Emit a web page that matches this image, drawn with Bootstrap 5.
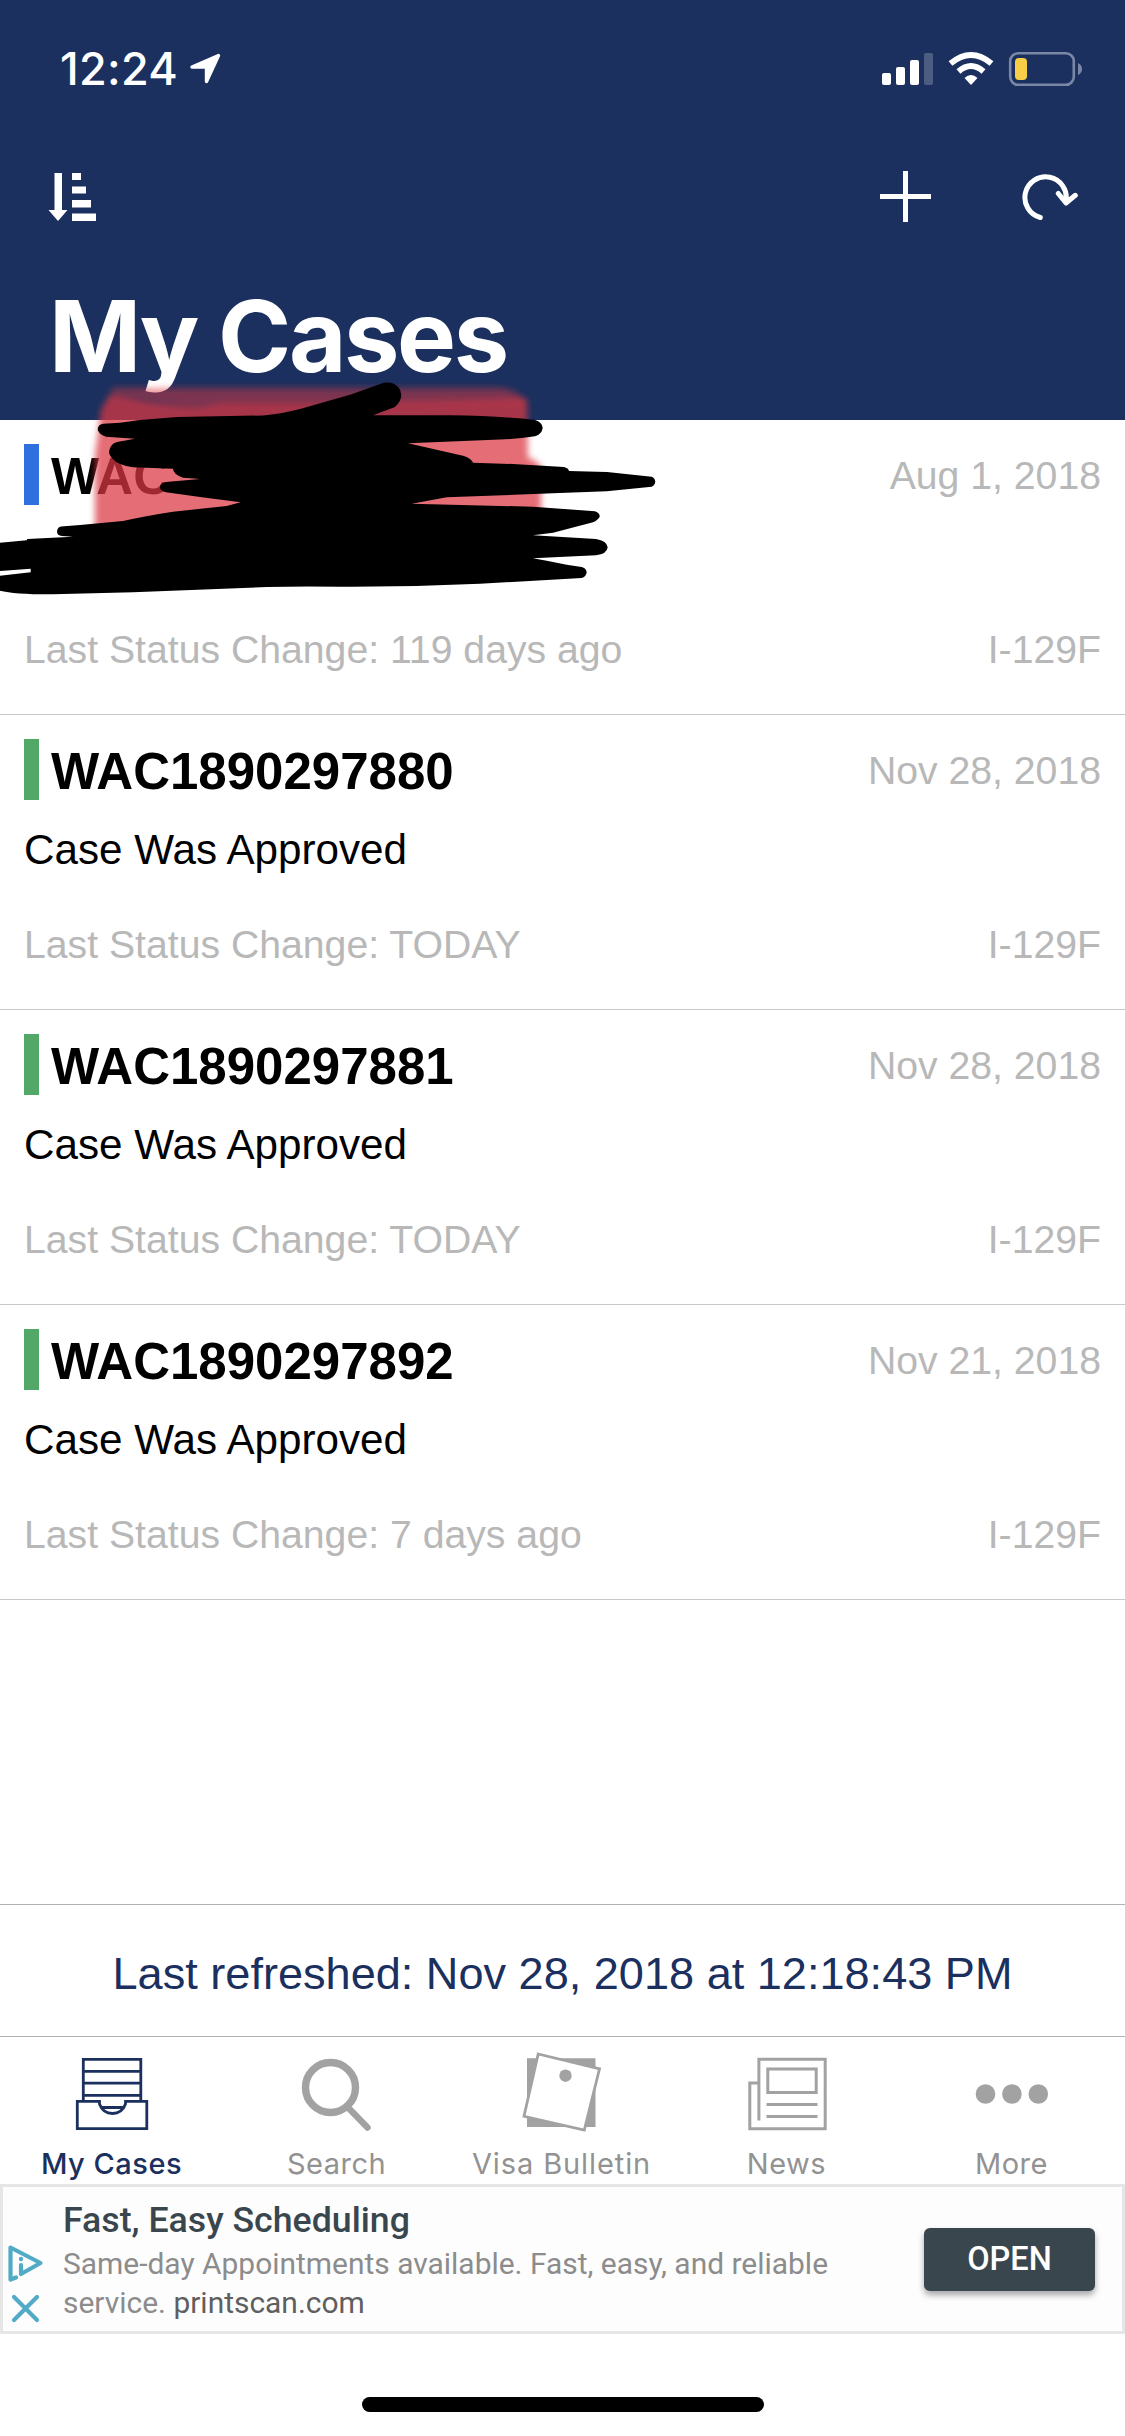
<!DOCTYPE html>
<html lang="en">
<head>
<meta charset="utf-8">
<meta name="viewport" content="width=device-width, initial-scale=1">
<title>My Cases</title>
<link href="https://cdn.jsdelivr.net/npm/bootstrap@5.3.0/dist/css/bootstrap.min.css" rel="stylesheet">
<style>
  body { font-family: "Liberation Sans", Arial, sans-serif; color: #000; }
  svg { display: block; }
  .screen { width: 1125px; height: 2436px; background: #fff; }
  .app-head { height: 420px; background: #1b305e; color: #fff; font-family: Inter, sans-serif; }
  .status-line { height: 138px; padding: 0 43px 0 60px; }
  .clock { font-size: 45px; font-weight: 500; line-height: 138px; letter-spacing: .3px; }
  .tools { height: 118px; padding: 0 47px 0 48px; }
  .head-title { font-size: 99px; font-weight: 700; line-height: 120px; padding-left: 49px; margin: 20px 0 0; letter-spacing: -2.4px; }
  .case-row { height: 295px; padding: 24px 24px 0; border-bottom: 1px solid #c8c7cc; }
  .flag { width: 15px; height: 61px; margin-right: 12px; }
  .flag-blue { background: #2f6fde; }
  .flag-green { background: #52a866; }
  .receipt { font-size: 51px; font-weight: 700; line-height: 66px; height: 64px; }
  .date-text { font-size: 39.2px; line-height: 64px; height: 63px; color: #b8b8b8; }
  .state-text { font-size: 42.2px; line-height: 62px; height: 60px; margin-top: 16px; }
  .meta-text { font-size: 39.2px; line-height: 52px; margin-top: 40px; color: #b8b8b8; }
  .refreshed { height: 133px; border-top: 1px solid #b2b2b2; border-bottom: 1px solid #b2b2b2; color: #1b305e; font-size: 45.1px; line-height: 137px; }
  .tab-strip { height: 147px; padding-top: 13px; font-family: Inter, sans-serif; font-size: 29px; line-height: 36px; color: #929292; }
  .tab-strip svg { margin-bottom: 10px; }
  .tab-strip span { margin-right: 2px; }
  .tab-item { width: 225px; letter-spacing: .5px; }
  .tab-item.on { color: #1b305e; font-weight: 500; }
  .tab-wide { letter-spacing: .9px; }
  .ad-box { height: 150px; border: 3px solid #e6e6e6; padding: 0 27px 0 5px; font-family: Roboto, sans-serif; background: #fdfdfd; }
  .ad-marks { margin-top: 52px; }
  .ad-copy { padding: 12px 0 0 19px; }
  .ad-title { font-size: 35.7px; font-weight: 500; line-height: 42px; color: #3a464d; }
  .ad-desc { font-size: 29.95px; line-height: 39px; margin-top: 3px; color: #8c8c8c; }
  .ad-desc span { color: #5f5f5f; }
  .ad-open { width: 171px; height: 63px; padding: 0; border: 0; border-radius: 6px; background: #3a464d; color: #fff; font-size: 32.5px; font-weight: 500; line-height: 60px; box-shadow: 0 4px 6px rgba(0,0,20,.35); }
  .home-zone { height: 102px; padding-top: 63px; }
  .home-bar { width: 402px; height: 15px; border-radius: 8px; background: #000; }
  .scribble { left: 0; top: 370px; pointer-events: none; }
</style>
</head>
<body>
<div class="screen position-relative overflow-hidden d-flex flex-column">
  <header class="app-head flex-shrink-0">
    <div class="status-line d-flex align-items-center justify-content-between">
      <div class="d-flex align-items-center">
        <span class="clock">12:24</span>
        <svg class="ms-2" width="36" height="32" viewBox="186 53 36 32"><path d="M218.500 55.500L192 67H206.500V81.500Z" fill="#fff" stroke="#fff" stroke-width="3.400" stroke-linejoin="round"/></svg>
      </div>
      <svg width="201" height="36" viewBox="881 51 201 36">
        <g fill="#fff"><rect x="882" y="73" width="9" height="12" rx="2"/><rect x="896" y="67" width="9" height="18" rx="2"/><rect x="910" y="60" width="9" height="25" rx="2"/><rect x="924" y="53" width="9" height="32" rx="2" opacity=".22"/>
        <path d="M971 85L964.500 78Q971 72 977.500 78Z"/></g>
        <g fill="none" stroke="#fff" stroke-width="6"><path d="M958.500 71.500Q971 60.500 983.500 71.500"/><path d="M950.500 63.500Q971 46.500 991.500 63.500"/></g>
        <rect x="1010.200" y="53.200" width="63.600" height="31.600" rx="8" fill="none" stroke="#7a87a5" stroke-width="2.600"/>
        <path d="M1078 63Q1082 65 1082 69T1078 75Z" fill="#7a87a5"/>
        <rect x="1015" y="58" width="12" height="22" rx="4" fill="#f7ce46"/>
      </svg>
    </div>
    <div class="tools d-flex align-items-center justify-content-between">
      <svg width="49" height="50" viewBox="48 172 49 50" fill="#fff"><path d="M54.500 173h7.500v37h5.500L58 221L48.500 210h6zM72 173h9v7h-9zM72 186.500h14v7H72zM72 200h19v7.500H72zM72 213.500h24v7.500H72z"/></svg>
      <svg width="198" height="52" viewBox="880 171 198 52" fill="none" stroke="#fff"><path d="M880 196.500h51M905.500 171v51" stroke-width="5"/><path d="M1040.300 217.500A20.700 20.700 0 1 1 1066 201M1058.300 193.500L1066 203L1075.300 195.300" stroke-width="5" stroke-linecap="round" stroke-linejoin="round"/></svg>
    </div>
    <h1 class="head-title">My Cases</h1>
  </header>

  <main class="flex-grow-1">
    <section class="case-row">
      <div class="d-flex align-items-start"><span class="flag flag-blue"></span><span class="receipt">WAC</span><span class="date-text ms-auto">Aug 1, 2018</span></div>
      <div class="state-text"></div>
      <div class="meta-text d-flex justify-content-between"><span>Last Status Change: 119 days ago</span><span>I-129F</span></div>
    </section>
    <section class="case-row">
      <div class="d-flex align-items-start"><span class="flag flag-green"></span><span class="receipt">WAC1890297880</span><span class="date-text ms-auto">Nov 28, 2018</span></div>
      <div class="state-text">Case Was Approved</div>
      <div class="meta-text d-flex justify-content-between"><span>Last Status Change: TODAY</span><span>I-129F</span></div>
    </section>
    <section class="case-row">
      <div class="d-flex align-items-start"><span class="flag flag-green"></span><span class="receipt">WAC1890297881</span><span class="date-text ms-auto">Nov 28, 2018</span></div>
      <div class="state-text">Case Was Approved</div>
      <div class="meta-text d-flex justify-content-between"><span>Last Status Change: TODAY</span><span>I-129F</span></div>
    </section>
    <section class="case-row">
      <div class="d-flex align-items-start"><span class="flag flag-green"></span><span class="receipt">WAC1890297892</span><span class="date-text ms-auto">Nov 21, 2018</span></div>
      <div class="state-text">Case Was Approved</div>
      <div class="meta-text d-flex justify-content-between"><span>Last Status Change: 7 days ago</span><span>I-129F</span></div>
    </section>
  </main>

  <footer class="flex-shrink-0">
    <div class="refreshed text-center">Last refreshed: Nov 28, 2018 at 12:18:43 PM</div>
    <nav class="tab-strip d-flex">
      <div class="tab-item on d-flex flex-column align-items-center">
        <svg width="81" height="86" viewBox="72 2050 81 86" fill="none" stroke="#1b305e" stroke-width="2.800"><path d="M83.300 2101V2059.300H140.800V2101M83 2071.300h58M83 2083.200h58M83 2095.300h58M77.300 2101.300H99.500V2104Q103 2113.500 112.500 2113.500T125.500 2104V2101.300H146.800V2128.700H77.300ZM101 2107.500h23"/></svg>
        <span>My Cases</span>
      </div>
      <div class="tab-item d-flex flex-column align-items-center">
        <svg width="90" height="86" viewBox="292.500 2050 90 86" fill="none" stroke="#a2a2a2"><circle cx="330" cy="2087.500" r="25" stroke-width="7.400"/><path d="M348 2108L367 2127.500" stroke-width="6.500" stroke-linecap="round"/></svg>
        <span>Search</span>
      </div>
      <div class="tab-item d-flex flex-column align-items-center">
        <svg width="90" height="86" viewBox="517.500 2050 90 86"><path d="M526.500 2058.300H595V2127H526.500Z" fill="#a2a2a2"/><path d="M537.700 2054L599 2068.800L583.800 2130L523.500 2116.300Z" fill="#fff" stroke="#a2a2a2" stroke-width="2.800"/><circle cx="565" cy="2075.700" r="6.200" fill="#a2a2a2"/></svg>
        <span class="tab-wide">Visa Bulletin</span>
      </div>
      <div class="tab-item d-flex flex-column align-items-center">
        <svg width="90" height="86" viewBox="742.500 2050 90 86" fill="none" stroke="#a2a2a2" stroke-width="3"><path d="M758.400 2120.500V2059.300H824.700V2128.700H749.300V2083H758M767.300 2069H815.700V2092.400H767.300ZM766 2104.500h51M766 2116.500h51"/></svg>
        <span>News</span>
      </div>
      <div class="tab-item d-flex flex-column align-items-center">
        <svg width="90" height="86" viewBox="967.500 2050 90 86" fill="#a2a2a2"><circle cx="985" cy="2094" r="9.800"/><circle cx="1011.400" cy="2094" r="9.800"/><circle cx="1037.800" cy="2094" r="9.800"/></svg>
        <span>More</span>
      </div>
    </nav>
    <div class="ad-box d-flex align-items-center">
      <svg class="ad-marks flex-shrink-0" width="36" height="84" viewBox="8 2243 36 84" fill="none" stroke="#51abc6" stroke-width="4.200" stroke-linejoin="round" stroke-linecap="round"><path d="M16 2277.500L10.500 2279.500V2247.500L40.500 2263L21 2274V2265"/><circle cx="21" cy="2259" r="2.200" fill="#51abc6" stroke="none"/><path d="M14 2297L37 2320M37 2297L14 2320"/></svg>
      <div class="ad-copy flex-grow-1 align-self-start">
        <div class="ad-title">Fast, Easy Scheduling</div>
        <div class="ad-desc">Same-day Appointments available. Fast, easy, and reliable<br>service. <span>printscan.com</span></div>
      </div>
      <button class="btn ad-open flex-shrink-0" type="button">OPEN</button>
    </div>
    <div class="home-zone"><div class="home-bar mx-auto"></div></div>
  </footer>

  <svg class="scribble position-absolute" width="680" height="240" viewBox="0 370 680 240">
    <defs><filter id="soft" x="-10%" y="-10%" width="120%" height="120%"><feGaussianBlur stdDeviation="3"/></filter></defs>
    <g filter="url(#soft)" fill="#dc3843">
      <path d="M110 388L500 388Q524 391 527 406L527 402L330 403L220 403L196 408L114 394Z" opacity=".5"/>
      <path d="M110 394L150 402L196 408L220 403L330 403L527 399L528 458Q543 462 541 474V530H95V455L101 410Z" opacity=".73"/>
    </g>
    <path fill-rule="evenodd" d="M97.700 429.300Q98 424.500 103 423.700L120 422.700L140 420L177 417L263 415.500Q280 414 300 409L350 394.700L383 383Q393 381 399 388Q405 397 395 407L373 415.300L450 415.300Q500 416 535 420Q542 422 542.700 427.700Q542 434 535 436.300Q518 439 500 439.500L408 443.300L464 456Q472 459 473 462.700L513 464L564 467Q568.500 468 569 471L607 472L651.700 476.700Q655 478 655.300 481.700Q655 485 651.700 486.700L606.700 491.300L553 493.300L446.700 497.300L411.700 503.700L533 506.700L595 511.300Q600 513 599.700 516.700Q598 520 593 522.300L553 532.700L533 535.300L596 539Q607 541 607.700 547.300Q607 554 596 555.300L533 558.300L546.700 560.700L566.700 564.700L581.700 567Q586 568 586.700 572.300Q586 577 581.700 578L480 583.700Q410 587 340 586.700Q300 586 267 587L133 592.300L53 594.300Q15 594.500 0 590.700V542.700L26.700 540.300L27.300 539L73 536.700L62 536Q57 535.500 57 531.500Q57.500 527 61 526.500L80 525L123 521Q145 516 173 511.700L226.700 506L240.700 502.300L200 497L166 492.300Q160 491 160 487.300Q160 483 166 482L200 479L183 477.700Q173 474 173 468.700L133 467.300Q118 465 113 459.300Q109 455 109 451.700Q110 444 117 442L135 438.700L106 436.700Q98 434 97.700 429.300ZM0 571L30.700 568.700V572.300L0 575.700Z"/>
  </svg>
</div>
<script src="https://cdn.jsdelivr.net/npm/bootstrap@5.3.0/dist/js/bootstrap.bundle.min.js"></script>
</body>
</html>
